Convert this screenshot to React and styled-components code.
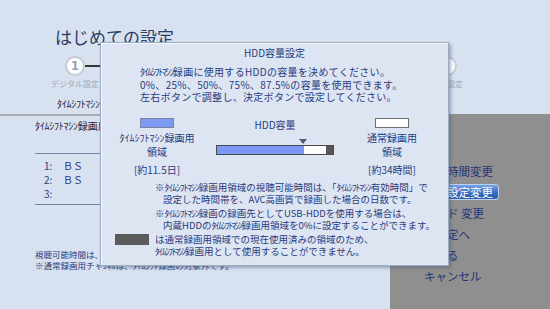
import React from "react";
import styled, { createGlobalStyle } from "styled-components";

const GlobalStyle = createGlobalStyle`
  html, body { margin: 0; padding: 0; }
  body {
    background: #d7e1f0;
    font-family: "Noto Sans CJK JP", "Noto Sans", sans-serif;
  }
`;

const NAVY = "#2a3b7c";

const Screen = styled.div`
  position: relative;
  width: 550px;
  height: 309px;
  overflow: hidden;
  background: #d7e1f0;
  display: flex;
  flex-direction: column;
`;

const Header = styled.header`
  height: 114px;
  box-sizing: border-box;
  padding-top: 27px;
  display: flex;
  flex-direction: column;
`;

const Title = styled.h1`
  margin: 0 0 0 55px;
  font-size: 17px;
  line-height: 20px;
  font-weight: normal;
  color: #2e3b63;
`;

const Steps = styled.div`
  margin: 9px 0 0 65px;
  display: grid;
  grid-template-columns: 20px 352px 20px;
  grid-template-rows: 20px 10px;
  row-gap: 3px;
  align-items: center;
`;

const Circle = styled.div`
  width: 20px;
  height: 20px;
  box-sizing: border-box;
  border-radius: 50%;
  background: #fff;
  border: 2px solid #c3cad5;
  color: #9aa3b0;
  font: bold 12px/16px "DejaVu Sans", sans-serif;
  text-align: center;
`;

const Connector = styled.div`
  height: 2px;
  background: #363636;
`;

const StepLabel = styled.div`
  grid-row: 2;
  grid-column: ${(p) => p.$col};
  justify-self: center;
  white-space: nowrap;
  font-size: 8px;
  line-height: 10px;
  color: #9fa8b8;
`;

const ColumnHead = styled.div`
  margin: 9px 0 0 57px;
  font-size: 10px;
  line-height: 12px;
  color: #1e2540;
`;

const TsmText = styled.span`
  white-space: nowrap;
  letter-spacing: ${(p) => -(1 - p.$scale) * 0.5}em;
`;

const Tsm = ({ scale = 0.75 }) => <TsmText $scale={scale}>ﾀｲﾑｼﾌﾄﾏｼﾝ</TsmText>;

const Body = styled.main`
  flex: 1;
  display: grid;
  grid-template-columns: 390px 160px;
`;

const LeftPanel = styled.div`
  border-top: 2px solid #a6abb4;
  padding: 4px 0 0 35px;
  color: #1e2540;
`;

const PanelHead = styled.div`
  font-size: 10px;
  line-height: 12px;
`;

const ChannelList = styled.div`
  margin-top: 21px;
  border-top: 1px solid #7385a3;
  border-bottom: 1px solid #7385a3;
  padding: 5px 0 3px 9px;
`;

const ChannelRow = styled.div`
  display: grid;
  grid-template-columns: 19px auto;
  font-size: 10px;
  line-height: 14px;
  color: ${NAVY};
`;

const FootNote = styled.div`
  margin-top: 44px;
  font-size: 8.5px;
  line-height: 11px;
  color: ${NAVY};
  white-space: nowrap;
`;

const RightPanel = styled.nav`
  background: #8f8f8f;
  padding: 46px 0 0 26px;
  display: flex;
  flex-direction: column;
`;

const MenuItem = styled.div`
  height: 21px;
  display: flex;
  align-items: center;
`;

const MenuLabel = styled.span`
  font-size: 11.5px;
  line-height: 14px;
  height: 14px;
  padding: 0 5px 0 8px;
  white-space: nowrap;
  color: ${(p) => (p.$active ? "#fff" : "#26357a")};
  border-radius: 3px;
  ${(p) =>
    p.$active &&
    `
    background: linear-gradient(#76a3e6, #3a6cc0 55%, #2d5cae);
    box-shadow: 0 0 0 1px #b9d0ef;
  `}
`;

const Dialog = styled.section`
  position: absolute;
  left: 100px;
  top: 42px;
  width: 349px;
  height: 224px;
  box-sizing: border-box;
  background: #dde5f3;
  border: 1px solid #9aabc2;
  box-shadow: inset 1px 1px 0 #f6f8fc, 2px 2px 3px rgba(70, 90, 120, 0.45);
  color: ${NAVY};
`;

const DialogTitle = styled.h2`
  margin: 0;
  height: 20px;
  font-size: 10px;
  line-height: 20px;
  font-weight: normal;
  text-align: center;
`;

const Lead = styled.div`
  margin: 3px 0 0 39px;
  font-size: 10px;
  line-height: 12.5px;
  letter-spacing: 0.3px;
  white-space: nowrap;
`;

const Gauge = styled.div`
  margin-top: 14px;
  padding-left: 16px;
  display: grid;
  grid-template-columns: 80px 156px 78px;
`;

const Area = styled.div`
  display: flex;
  flex-direction: column;
  align-items: center;
  font-size: 10px;
  line-height: 14px;
  white-space: nowrap;
`;

const Swatch = styled.div`
  width: 34px;
  height: 10px;
  box-sizing: border-box;
  background: ${(p) => p.$color};
  border: 1px solid ${(p) => p.$edge || "#7a84a0"};
  margin-bottom: 3px;
  flex: none;
`;

const Days = styled.div`
  margin-top: 4px;
`;

const Marker = styled.div`
  width: 118px;
  margin-top: 7px;
  height: 5px;
  position: relative;
`;

const Arrow = styled.div`
  position: absolute;
  top: 0;
  width: 0;
  height: 0;
  border-left: 4px solid transparent;
  border-right: 4px solid transparent;
  border-top: 5px solid #4d5a78;
`;

const Bar = styled.div`
  margin-top: 1px;
  width: 118px;
  height: 10px;
  box-sizing: border-box;
  border: 1px solid #4a4a4a;
  display: flex;
`;

const Segment = styled.div`
  height: 100%;
  background: ${(p) => p.$color};
`;

const Notes = styled.div`
  margin: 4px 0 0 54px;
  font-size: 9.5px;
  line-height: 12px;
  white-space: nowrap;
`;

const Note = styled.div`
  margin-bottom: 2px;
  & > div + div {
    padding-left: 8px;
  }
`;

const Legend = styled.div`
  margin: 1px 0 0 14px;
  display: flex;
  gap: 6px;
  font-size: 9.5px;
  line-height: 12px;
  white-space: nowrap;
`;

const LegendSwatch = styled.div`
  width: 34px;
  height: 11px;
  margin-top: 1px;
  background: #5b5b5b;
  flex: none;
`;

const segments = [
  { w: 87, color: "#7b98f4" },
  { w: 22, color: "#ffffff" },
  { w: 7, color: "#555555" },
];

const menu = [
  { label: "有効時間変更" },
  { label: "容量設定変更", active: true },
  { label: "モード 変更" },
  { label: "再設定へ" },
  { label: "もどる" },
  { label: "キャンセル" },
];

export default function App() {
  return (
    <>
      <GlobalStyle />
      <Screen>
        <Header>
          <Title>はじめての設定</Title>
          <Steps>
            <Circle>1</Circle>
            <Connector />
            <Circle />
            <StepLabel $col={1}>デジタル設定</StepLabel>
            <StepLabel $col={3}>録画設定</StepLabel>
          </Steps>
          <ColumnHead>
            <Tsm scale={0.95} />
            設定
          </ColumnHead>
        </Header>

        <Body>
          <LeftPanel>
            <PanelHead>
              <Tsm scale={0.95} />
              録画用チャンネル
            </PanelHead>
            <ChannelList>
              <ChannelRow>
                <span>1:</span>
                <span>ＢＳ</span>
              </ChannelRow>
              <ChannelRow>
                <span>2:</span>
                <span>ＢＳ</span>
              </ChannelRow>
              <ChannelRow>
                <span>3:</span>
                <span />
              </ChannelRow>
            </ChannelList>
            <FootNote>
              視聴可能時間は、<Tsm scale={0.8} />有効時間で設定した時間帯の日数です。
              <br />
              ※通常録画用チャﾝﾈﾙは、ﾀｲﾑｼﾌﾄ録画の対象外です。
            </FootNote>
          </LeftPanel>
          <RightPanel>
            {menu.map((m) => (
              <MenuItem key={m.label}>
                <MenuLabel $active={m.active}>{m.label}</MenuLabel>
              </MenuItem>
            ))}
          </RightPanel>
        </Body>

        <Dialog>
          <DialogTitle>HDD容量設定</DialogTitle>
          <Lead>
            <Tsm scale={0.73} />
            録画に使用するHDDの容量を決めてください。
            <br />
            0%、25%、50%、75%、87.5%の容量を使用できます。
            <br />
            左右ボタンで調整し、決定ボタンで設定してください。
          </Lead>

          <Gauge>
            <Area>
              <Swatch $color="#7d9af4" />
              <div>
                <Tsm scale={1} />
                録画用
              </div>
              <div>領域</div>
              <Days>[約11.5日]</Days>
            </Area>
            <Area>
              <div>HDD容量</div>
              <Marker>
                <Arrow style={{ left: segments[0].w - 4 }} />
              </Marker>
              <Bar>
                {segments.map((s, i) => (
                  <Segment key={i} $color={s.color} style={{ width: s.w }} />
                ))}
              </Bar>
            </Area>
            <Area>
              <Swatch $color="#ffffff" $edge="#6f6f6f" />
              <div>通常録画用</div>
              <div>領域</div>
              <Days>[約34時間]</Days>
            </Area>
          </Gauge>

          <Notes>
            <Note>
              <div>
                ※<Tsm scale={0.8} />
                録画用領域の視聴可能時間は、「<Tsm scale={0.8} />
                有効時間」で
              </div>
              <div>設定した時間帯を、AVC高画質で録画した場合の日数です。</div>
            </Note>
            <Note>
              <div>
                ※<Tsm scale={0.8} />
                録画の録画先としてUSB-HDDを使用する場合は、
              </div>
              <div>
                内蔵HDDの<Tsm scale={0.7} />
                録画用領域を0%に設定することができます。
              </div>
            </Note>
          </Notes>

          <Legend>
            <LegendSwatch />
            <div>
              は通常録画用領域での現在使用済みの領域のため、
              <br />
              <Tsm scale={0.7} />
              録画用として使用することができません。
            </div>
          </Legend>
        </Dialog>
      </Screen>
    </>
  );
}
